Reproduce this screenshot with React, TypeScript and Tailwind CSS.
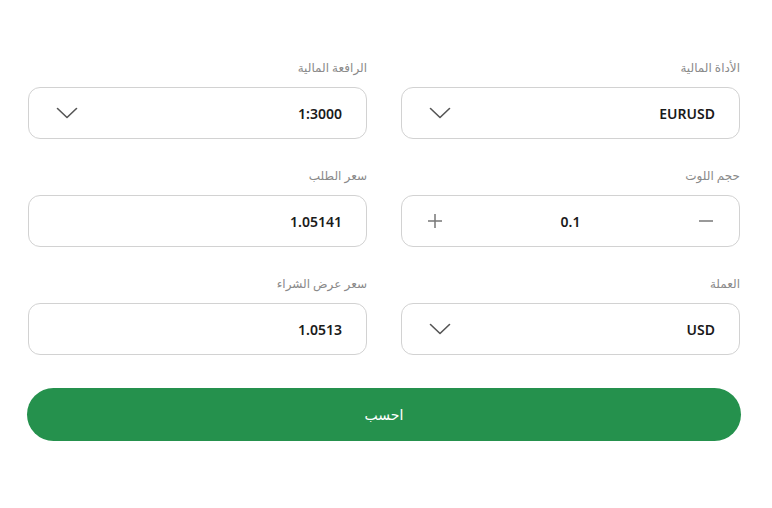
import React from "react";

const font = { fontFamily: '"Noto Sans", "DejaVu Sans", sans-serif' };

function Chevron() {
  return (
    <svg width="22" height="12" viewBox="0 0 22 12" fill="none" className="shrink-0">
      <path d="M1.5 1.5 L11 10.5 L20.5 1.5" stroke="#555" strokeWidth="1.6" strokeLinecap="round" strokeLinejoin="round" />
    </svg>
  );
}

function Field({ label, children }: { label: string; children: React.ReactNode }) {
  return (
    <div className="flex flex-col">
      <div className="h-[16px] text-[12px] leading-[16px] text-[#8a8a8a] mb-[11px]">{label}</div>
      {children}
    </div>
  );
}

function Select({ value }: { value: string }) {
  return (
    <div className="h-[52px] rounded-[12px] border border-[#d2d2d2] bg-white flex items-center justify-between pr-[24px] pl-[27px]">
      <span dir="ltr" className="text-[14px] font-semibold text-[#1a1a1a]">{value}</span>
      <Chevron />
    </div>
  );
}

function Input({ value }: { value: string }) {
  return (
    <div className="h-[52px] rounded-[12px] border border-[#d2d2d2] bg-white flex items-center pr-[24px]">
      <span dir="ltr" className="text-[14px] font-semibold text-[#1a1a1a]">{value}</span>
    </div>
  );
}

function Stepper({ value }: { value: string }) {
  return (
    <div className="h-[52px] rounded-[12px] border border-[#d2d2d2] bg-white flex items-center justify-between pr-[25px] pl-[25px]">
      <svg width="16" height="16" viewBox="0 0 16 16">
        <path d="M1 8 H15" stroke="#777" strokeWidth="1.5" />
      </svg>
      <span dir="ltr" className="text-[14px] font-semibold text-[#1a1a1a]">{value}</span>
      <svg width="16" height="16" viewBox="0 0 16 16">
        <path d="M1 8 H15 M8 1 V15" stroke="#777" strokeWidth="1.5" />
      </svg>
    </div>
  );
}

export default function App() {
  return (
    <div dir="rtl" style={font} className="w-[772px] h-[508px] bg-white pt-[60px] pr-[32px] pl-[28px]">
      <div className="grid grid-cols-2 gap-x-[34px] gap-y-[29px]">
        <Field label="الأداة المالية">
          <Select value="EURUSD" />
        </Field>
        <Field label="الرافعة المالية">
          <Select value="1:3000" />
        </Field>
        <Field label="حجم اللوت">
          <Stepper value="0.1" />
        </Field>
        <Field label="سعر الطلب">
          <Input value="1.05141" />
        </Field>
        <Field label="العملة">
          <Select value="USD" />
        </Field>
        <Field label="سعر عرض الشراء">
          <Input value="1.0513" />
        </Field>
      </div>
      <button
        type="button"
        className="mt-[33px] -mx-px w-[714px] h-[53px] rounded-full bg-[#25914d] text-white text-[14px] flex items-center justify-center"
      >
        احسب
      </button>
    </div>
  );
}
